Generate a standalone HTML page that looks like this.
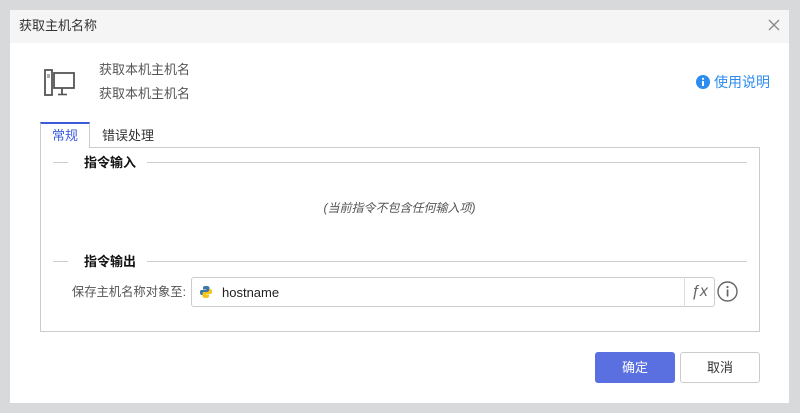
<!DOCTYPE html>
<html><head><meta charset="utf-8"><style>
*{margin:0;padding:0;box-sizing:border-box}
body{width:800px;height:413px;background:#d8d9db;font-family:"Liberation Sans","Noto Sans CJK SC",sans-serif;font-size:13px;color:#333;position:relative;overflow:hidden}
.dlg{position:absolute;left:10px;top:10px;width:779px;height:393px;background:#fff}
.title{height:33px;background:#f5f5f5;padding-left:9px;line-height:32px;font-size:13px;color:#333}
.close{position:absolute;right:8px;top:8px;width:14px;height:14px}
.a{position:absolute;white-space:nowrap;line-height:18px}
</style></head><body>
<div class="dlg">
<div class="title">获取主机名称</div>
<svg class="close" viewBox="0 0 14 14"><path d="M2 2L12 12M12 2L2 12" stroke="#888" stroke-width="1.3"/></svg>
<svg class="a" style="left:34px;top:59px" width="33" height="36" viewBox="0 0 33 36">
<rect x="1" y="1" width="7" height="25" fill="none" stroke="#555" stroke-width="1.8"/>
<line x1="3" y1="6" x2="6" y2="6" stroke="#555"/><line x1="3" y1="8" x2="6" y2="8" stroke="#555"/>
<rect x="10" y="4" width="20" height="15" fill="none" stroke="#555" stroke-width="1.8"/>
<line x1="18" y1="19" x2="18" y2="25" stroke="#555" stroke-width="1.8"/><line x1="14" y1="25.5" x2="23" y2="25.5" stroke="#555" stroke-width="1.6"/>
</svg>
<div class="a" style="left:89px;top:51px;color:#555">获取本机主机名</div>
<div class="a" style="left:89px;top:75px;color:#555">获取本机主机名</div>
<svg class="a" style="left:686px;top:65px" width="14" height="14" viewBox="0 0 14 14"><circle cx="7" cy="7" r="7" fill="#2d8cf0"/><rect x="6" y="6" width="2" height="5" fill="#fff"/><circle cx="7" cy="3.8" r="1.1" fill="#fff"/></svg>
<div class="a" style="left:704px;top:62px;color:#2d8cf0;font-size:14px;line-height:20px">使用说明</div>
<div class="a" style="left:30px;top:112px;width:50px;height:26px;border-top:2px solid #3b5bdb;border-left:1px solid #ccc;border-right:1px solid #ccc;background:#fff;z-index:2;color:#3b5bdb;text-align:center;line-height:24px">常规</div>
<div class="a" style="left:92px;top:117px;color:#333">错误处理</div>
<div class="a" style="left:30px;top:137px;width:720px;height:185px;border:1px solid #ccc"></div>
<div class="a" style="left:43px;top:152px;width:15px;border-top:1px solid #ccc"></div>
<div class="a" style="left:74px;top:144px;font-weight:bold;color:#111">指令输入</div>
<div class="a" style="left:137px;top:152px;width:600px;border-top:1px solid #ccc"></div>
<div class="a" style="left:0;width:779px;top:189px;text-align:center;font-style:italic;font-size:12px;color:#555">(当前指令不包含任何输入项)</div>
<div class="a" style="left:43px;top:251px;width:15px;border-top:1px solid #ccc"></div>
<div class="a" style="left:74px;top:243px;font-weight:bold;color:#111">指令输出</div>
<div class="a" style="left:137px;top:251px;width:600px;border-top:1px solid #ccc"></div>
<div class="a" style="left:55px;width:121px;text-align:right;top:273px;color:#555;font-size:12.3px">保存主机名称对象至:</div>
<div class="a" style="left:181px;top:267px;width:524px;height:30px;border:1px solid #ccc;border-radius:3px"></div>
<div class="a" style="left:674px;top:267px;width:1px;height:30px;background:#ddd"></div>
<div class="a" style="left:681px;top:273px;font-style:italic;color:#666;font-size:16px">ƒx</div>
<svg class="a" style="left:189px;top:275px" width="14" height="14" viewBox="0 0 14 14"><path d="M7 1C4 1 4 2 4 3v1.5h3.2V5H2.5C1 5 1 6.5 1 7.5S1.5 10 2.5 10H4V8.5C4 7.5 5 7 6 7h3c1 0 1.5-.5 1.5-1.5V3C10.5 2 10 1 7 1z" fill="#3b77a8"/><path d="M7 13c3 0 3-1 3-2V9.5H6.8V9h4.7C13 9 13 7.5 13 6.5S12.5 4 11.5 4H10v1.5C10 6.5 9 7 8 7H5c-1 0-1.5.5-1.5 1.5V11c0 1 .5 2 3.5 2z" fill="#f5c518"/></svg>
<div class="a" style="left:212px;top:274px;color:#222">hostname</div>
<svg class="a" style="left:707px;top:271px" width="21" height="21" viewBox="0 0 21 21"><circle cx="10.5" cy="10.5" r="9.5" fill="none" stroke="#666" stroke-width="1.4"/><rect x="9.7" y="8.5" width="1.7" height="7" fill="#666"/><circle cx="10.5" cy="6" r="1.1" fill="#666"/></svg>
<div class="a" style="left:585px;top:342px;width:80px;height:31px;background:#5a6fe0;border-radius:3px;color:#fff;text-align:center;line-height:31px">确定</div>
<div class="a" style="left:670px;top:342px;width:80px;height:31px;border:1px solid #ccc;border-radius:3px;color:#333;text-align:center;line-height:29px">取消</div>
</div>
</body></html>
